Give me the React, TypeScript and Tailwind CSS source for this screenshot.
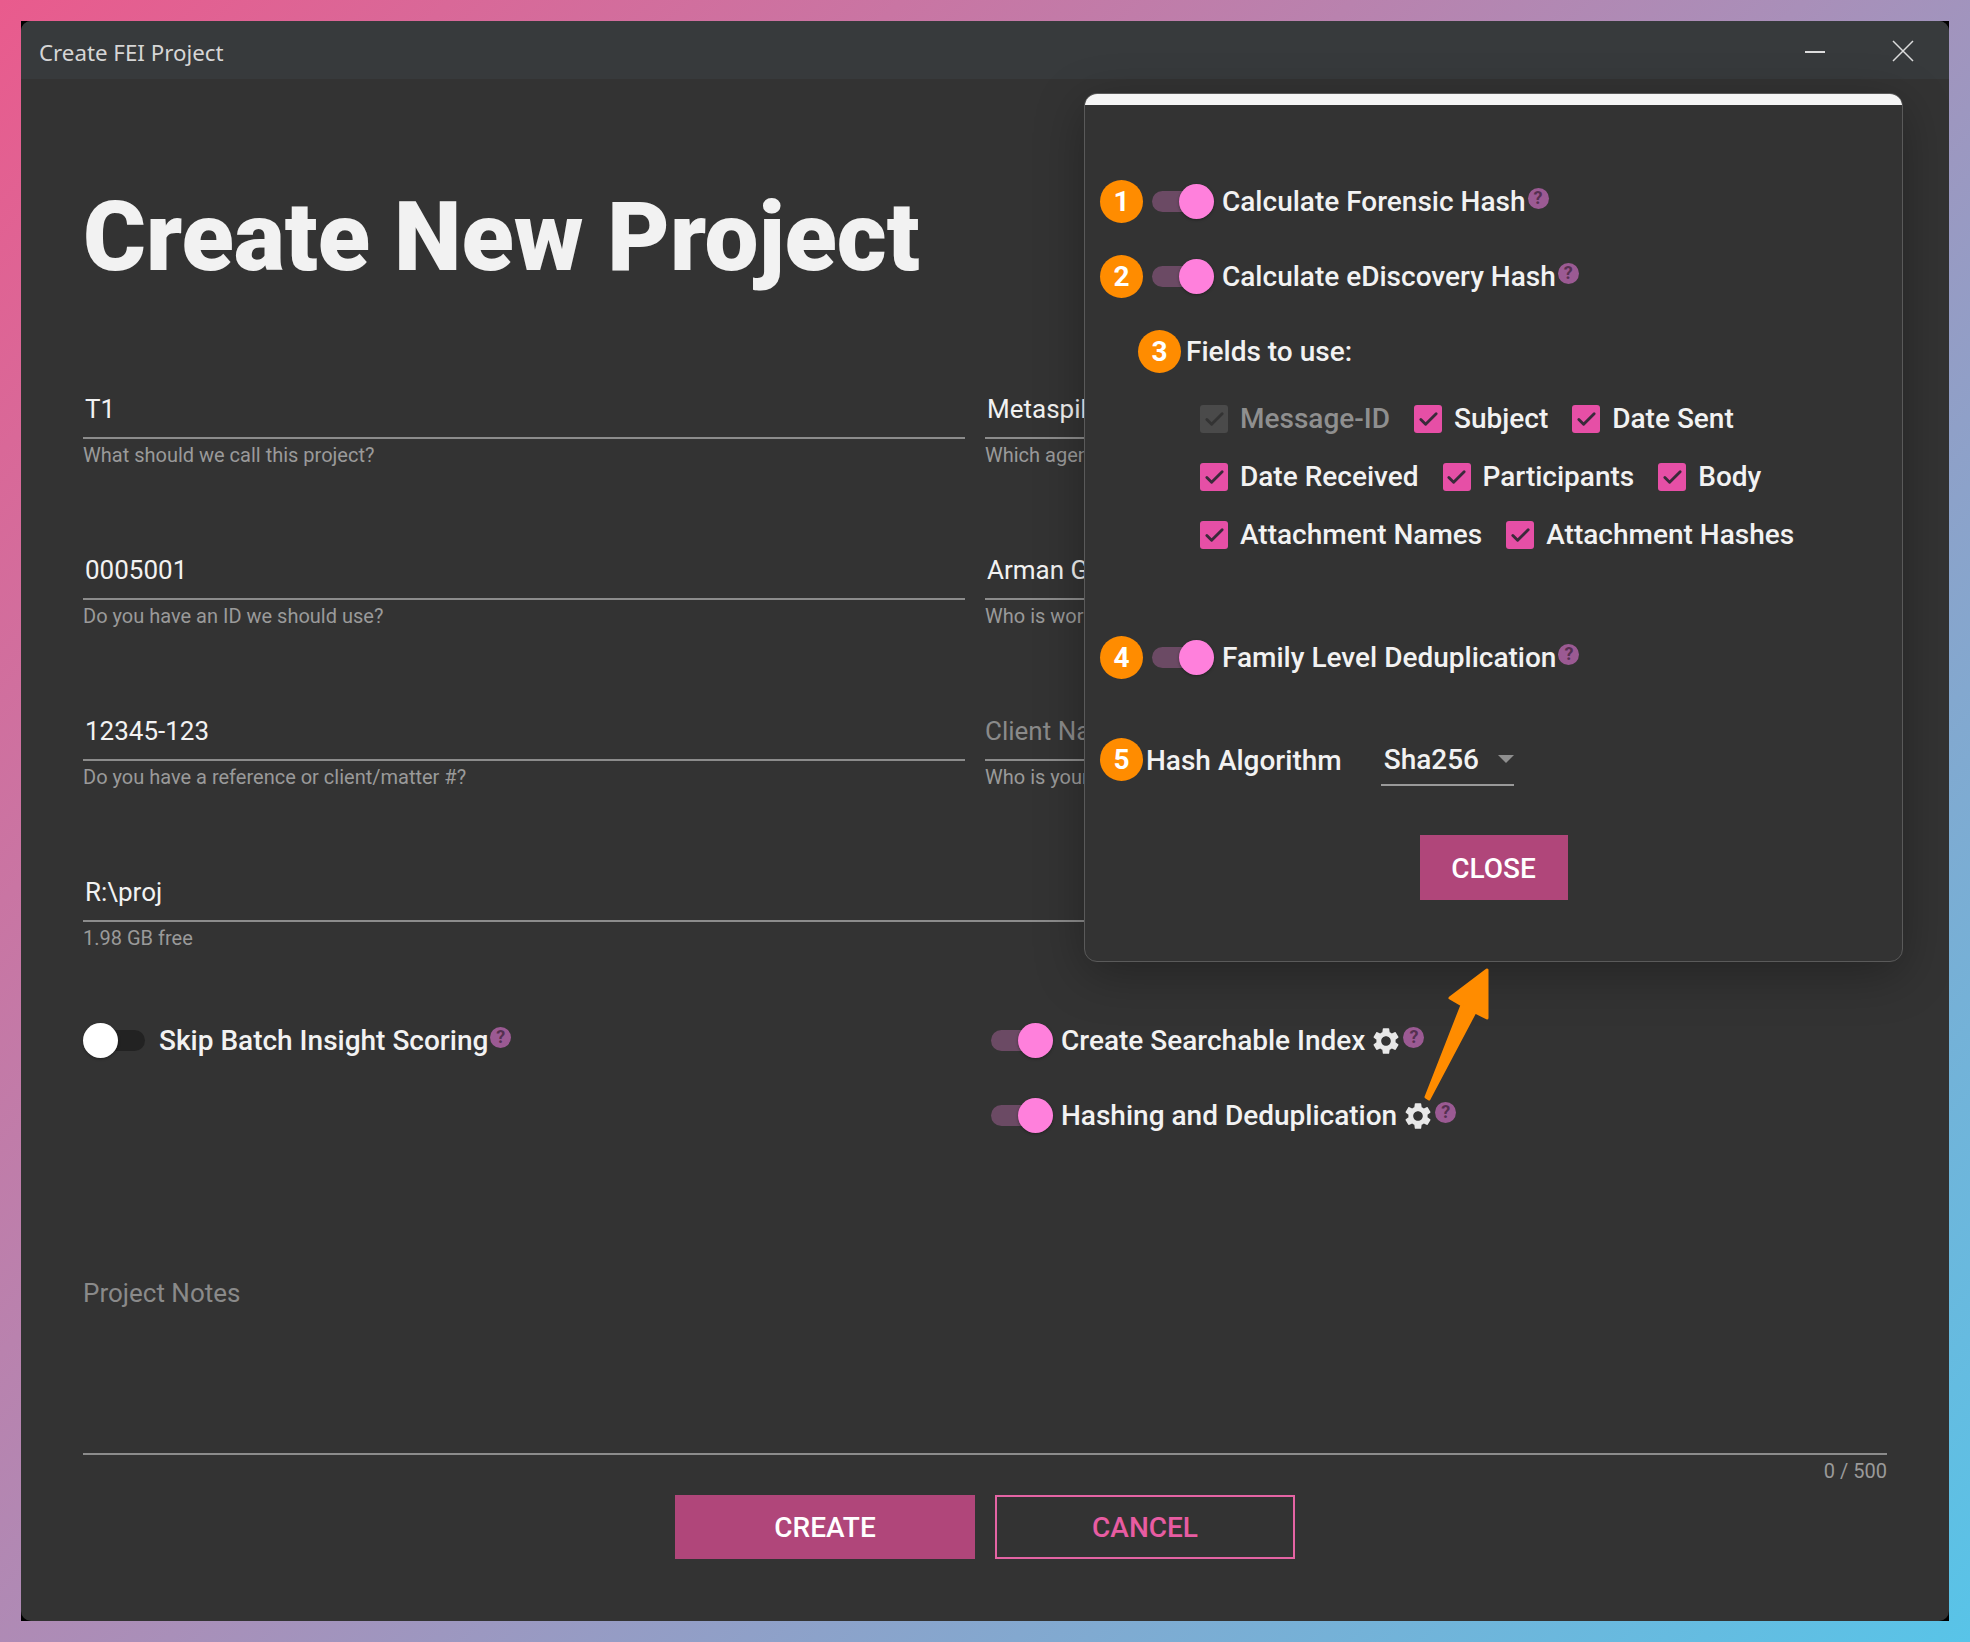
import { Check } from "lucide-react";
import { MdSettings } from "react-icons/md";

const roboto = "font-['Roboto',sans-serif]";

function Help({ className = "" }: { className?: string }) {
  return (
    <span className={`relative flex h-[21px] w-[21px] shrink-0 items-center justify-center rounded-full bg-[#9b5a93] text-[18px] font-bold leading-none text-[#553050] ${className}`}>
      ?
    </span>
  );
}

function Toggle({ on = true }: { on?: boolean }) {
  return (
    <span className="relative block h-[35px] w-[62px] shrink-0">
      <span className={`absolute inset-x-0 top-[7px] h-[21px] rounded-full ${on ? "bg-[#6b4a64]" : "bg-[#222222]"}`} />
      <span className={`absolute top-0 h-[35px] w-[35px] rounded-full shadow-[0_1px_3px_rgba(0,0,0,0.35)] ${on ? "right-0 bg-[#ff80dc]" : "left-0 bg-white"}`} />
    </span>
  );
}

function Badge({ n }: { n: number }) {
  return (
    <span className="flex h-[43px] w-[43px] shrink-0 items-center justify-center rounded-full bg-[#ff8c00] text-[28px] font-bold text-white">
      {n}
    </span>
  );
}

function Gear() {
  return <MdSettings className="-ml-[3px] h-[32px] w-[32px] shrink-0 text-[#e8e8e8]" />;
}

function Field({ value, hint, placeholder }: { value: string; hint: string; placeholder?: boolean }) {
  return (
    <div>
      <div className={`flex h-[58px] items-center border-b-2 border-[#8c8c8c] pt-[1px] text-[26px] ${placeholder ? "text-[#8a8a8a]" : "pl-[2px] text-[#f2f2f2]"}`}>
        {value}
      </div>
      <div className="mt-[4px] text-[20px] leading-[24px] text-[#9a9a9a]">{hint}</div>
    </div>
  );
}

function Box({ label, disabled }: { label: string; disabled?: boolean }) {
  return (
    <span className="flex items-center gap-[12px]">
      <span className={`flex h-[28px] w-[28px] items-center justify-center rounded-[3px] ${disabled ? "bg-[#4a4a4a] text-[#333333]" : "bg-[#e64fa6] text-[#3a2a3a]"}`}>
        <Check size={23} strokeWidth={3} />
      </span>
      <span className={disabled ? "text-[#8f8f8f]" : "text-[#f2f2f2]"}>{label}</span>
    </span>
  );
}

function HashPopup() {
  return (
    <div className="absolute left-[1063px] top-[72px] h-[869px] w-[819px] overflow-hidden rounded-[13px] border border-[#5a5a5a] bg-[#333333] pl-[15px] text-[28px] font-medium text-[#f2f2f2] shadow-[0_12px_50px_rgba(0,0,0,0.3)]">
      <div className="-ml-[15px] h-[11px] bg-[#f5f5f5]" />
      <div className="mt-[75px] flex h-[43px] items-center">
        <Badge n={1} />
        <span className="ml-[9px]"><Toggle /></span>
        <span className="ml-[8px]">Calculate Forensic Hash</span>
        <Help className="-mt-[7px] ml-[2px]" />
      </div>
      <div className="mt-[32px] flex h-[43px] items-center">
        <Badge n={2} />
        <span className="ml-[9px]"><Toggle /></span>
        <span className="ml-[8px]">Calculate eDiscovery Hash</span>
        <Help className="-mt-[7px] ml-[2px]" />
      </div>
      <div className="ml-[38px] mt-[32px] flex h-[43px] items-center gap-[5px]">
        <Badge n={3} />
        <span>Fields to use:</span>
      </div>
      <div className="ml-[100px] mt-[31px] flex flex-col gap-[28px]">
        <div className="flex h-[30px] items-center gap-[24px]">
          <Box label="Message-ID" disabled />
          <Box label="Subject" />
          <Box label="Date Sent" />
        </div>
        <div className="flex h-[30px] items-center gap-[24px]">
          <Box label="Date Received" />
          <Box label="Participants" />
          <Box label="Body" />
        </div>
        <div className="flex h-[30px] items-center gap-[24px]">
          <Box label="Attachment Names" />
          <Box label="Attachment Hashes" />
        </div>
      </div>
      <div className="mt-[86px] flex h-[43px] items-center">
        <Badge n={4} />
        <span className="ml-[9px]"><Toggle /></span>
        <span className="ml-[8px]">Family Level Deduplication</span>
        <Help className="-mt-[7px] ml-[2px]" />
      </div>
      <div className="mt-[59px] flex h-[48px] items-start">
        <Badge n={5} />
        <span className="ml-[3px] flex h-[45px] items-center">Hash Algorithm</span>
        <div className="ml-[39px] flex h-[48px] w-[133px] items-start justify-between border-b-2 border-[#9a9a9a] pl-[3px]">
          <span className="flex h-[44px] items-center">Sha256</span>
          <span className="mt-[17px] h-0 w-0 border-x-[8px] border-t-[8px] border-x-transparent border-t-[#8f8f8f]" />
        </div>
      </div>
      <div className="-ml-[15px] mt-[49px] flex justify-center">
        <button className="h-[65px] w-[148px] bg-[#b0467a] pt-[2px] text-[28px] font-medium text-white">CLOSE</button>
      </div>
    </div>
  );
}

export default function App() {
  return (
    <div className={`h-[1642px] w-[1970px] bg-[linear-gradient(135deg,#e95b8d_0%,#a98fb9_50%,#58c4e8_100%)] p-[21px] ${roboto}`}>
      <div className="h-[1600px] w-[1928px] bg-black">
        <div className="relative flex h-full flex-col overflow-hidden rounded-[10px] bg-[#333333]">
          <div className="flex h-[58px] shrink-0 items-center justify-between bg-[#373a3c] pl-[18px] pr-[35px]">
            <span className="mt-[5px] font-['Noto_Sans',sans-serif] text-[22.3px] text-[#d6d6d6]">Create FEI Project</span>
            <div className="flex items-center gap-[67px]">
              <span className="mt-[3px] h-[2px] w-[20px] bg-[#dcdcdc]" />
              <svg className="mt-[1px] h-[22px] w-[22px]" viewBox="0 0 22 22" fill="none" stroke="#dcdcdc" strokeWidth="1.5">
                <path d="M1 1 L21 21 M21 1 L1 21" />
              </svg>
            </div>
          </div>

          <div className="px-[62px]">
            <h1 className="mt-[102px] h-[112px] text-[96px] font-black leading-[112px] text-[#f2f2f2]">Create New Project</h1>

            <div className="mt-[88px] grid grid-cols-[882px_1fr] grid-rows-[161px_161px_161px_159px] gap-x-[20px]">
              <Field value="T1" hint="What should we call this project?" />
              <Field value="Metaspike" hint="Which agency is this for?" />
              <Field value="0005001" hint="Do you have an ID we should use?" />
              <Field value="Arman Gungor" hint="Who is working on this?" />
              <Field value="12345-123" hint="Do you have a reference or client/matter #?" />
              <Field value="Client Name" hint="Who is your client?" placeholder />
              <div className="col-span-2">
                <Field value="R:\proj" hint="1.98 GB free" />
              </div>
            </div>

            <div className="grid grid-cols-[882px_1fr] gap-x-[26px] text-[28px] font-medium text-[#f2f2f2]">
              <div className="flex h-[35px] items-center gap-[14px]">
                <Toggle on={false} />
                <span>Skip Batch Insight Scoring</span>
                <Help className="-ml-[12px] -mt-[7px]" />
              </div>
              <div className="flex flex-col gap-[40px]">
                <div className="flex h-[35px] items-center gap-[8px]">
                  <Toggle />
                  <span>Create Searchable Index</span>
                  <Gear />
                  <Help className="-ml-[7px] -mt-[7px]" />
                </div>
                <div className="flex h-[35px] items-center gap-[8px]">
                  <Toggle />
                  <span>Hashing and Deduplication</span>
                  <Gear />
                  <Help className="-ml-[7px] -mt-[7px]" />
                </div>
              </div>
            </div>

            <div className="mt-[144px] h-[178px] border-b-2 border-[#8c8c8c] text-[26px] leading-[32px] text-[#8a8a8a]">Project Notes</div>
            <div className="mt-[5px] text-right text-[20px] leading-[23px] text-[#9a9a9a]">0 / 500</div>

            <div className="mt-[12px] flex justify-center gap-[20px] text-[28px] font-medium">
              <button className="h-[64px] w-[300px] bg-[#b0467a] pt-[2px] text-white">CREATE</button>
              <button className="h-[64px] w-[300px] border-2 border-[#e464a4] pt-[2px] text-[#e85ca2]">CANCEL</button>
            </div>
          </div>

          <HashPopup />

          <svg className="absolute left-[1385px] top-[925px] h-[165px] w-[90px]" viewBox="0 0 90 165">
            <path d="M20 151 L56 59 L44 52 L81 24 L81 72 L69 66 L23 153 Z" fill="#ff8c00" stroke="#ff8c00" strokeWidth="3" strokeLinejoin="round" />
          </svg>
        </div>
      </div>
    </div>
  );
}
